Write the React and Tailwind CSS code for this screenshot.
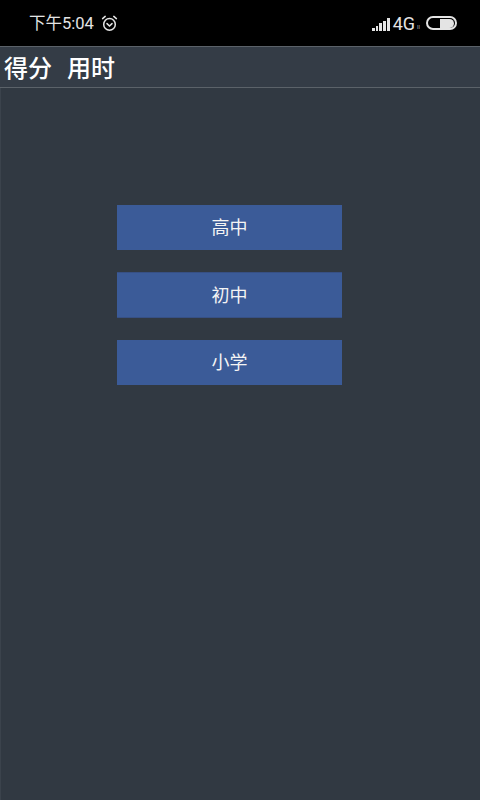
import React from 'react';

const cjk = 'font-["Roboto","Noto_Sans_CJK_SC",sans-serif]';

function Alarm() {
	return (
		<svg width="17" height="17" viewBox="0 0 17 17" fill="none" stroke="#e4e4e4" strokeWidth="1.5" strokeLinecap="round">
			<circle cx="8.5" cy="9.4" r="5.8" />
			<path d="M1.6 3.6 L4.2 1.4 M15.4 3.6 L12.8 1.4" />
			<path d="M6 8.6 L8.5 11 L11 8.6" />
		</svg>
	);
}

function Signal() {
	const bars = [3, 5, 8, 10, 13];
	return (
		<div className="flex items-end gap-[1px] h-[14px] mt-[1px]">
			{bars.map((h, i) => (
				<div key={i} className="w-[2.8px] bg-[#e4e4e4]" style={{height: h}} />
			))}
		</div>
	);
}

function Battery() {
	return (
		<div className="w-[31px] h-[14px] rounded-full border-2 border-[#e4e4e4] flex justify-end items-center pr-[1px]">
			<div className="w-[14px] h-[9px] bg-[#e4e4e4] rounded-r-full rounded-l-[1px]" />
		</div>
	);
}

function LevelButton({label, className = ''}) {
	return (
		<button className={`w-[225px] bg-[#3b5b98] text-[#f4f4f4] text-[18px] flex items-center justify-center ${className}`}>
			{label}
		</button>
	);
}

function App() {
	return (
		<div className={`w-[480px] h-[800px] flex flex-col bg-[#313942] overflow-hidden ${cjk}`}>
			<div className="h-[46px] bg-black flex items-center justify-between pl-[29px] pr-[23px] shrink-0">
				<div className="flex items-center gap-[7px] text-[#e4e4e4] text-[16.5px]">
					<span className="mt-[2px]">下午5:04</span>
					<Alarm />
				</div>
				<div className="flex items-center text-[#e4e4e4]">
					<Signal />
					<span className="text-[18px] ml-[3px] mt-[1px]">4G</span>
					<span className="text-[6px] ml-[2px] mr-[6px] mt-[7px] text-[#aaaaaa]">ll</span>
					<Battery />
				</div>
			</div>
			<div className="h-[42px] shrink-0 border-t border-b border-[#5b6269] bg-[#343c46] flex items-center pl-[4px] gap-[15px] text-white text-[24px] leading-none font-medium pt-[3px]">
				<span>得分</span>
				<span>用时</span>
			</div>
			<div className="flex-1 border-l border-[#3b434c] pl-[116px] pt-[117px]">
				<div className="flex flex-col">
					<LevelButton label="高中" className="h-[45px] mb-[22px]" />
					<LevelButton label="初中" className="h-[46px] mb-[22px] border-y border-[#375084]" />
					<LevelButton label="小学" className="h-[45px]" />
				</div>
			</div>
		</div>
	);
}

export default App;
